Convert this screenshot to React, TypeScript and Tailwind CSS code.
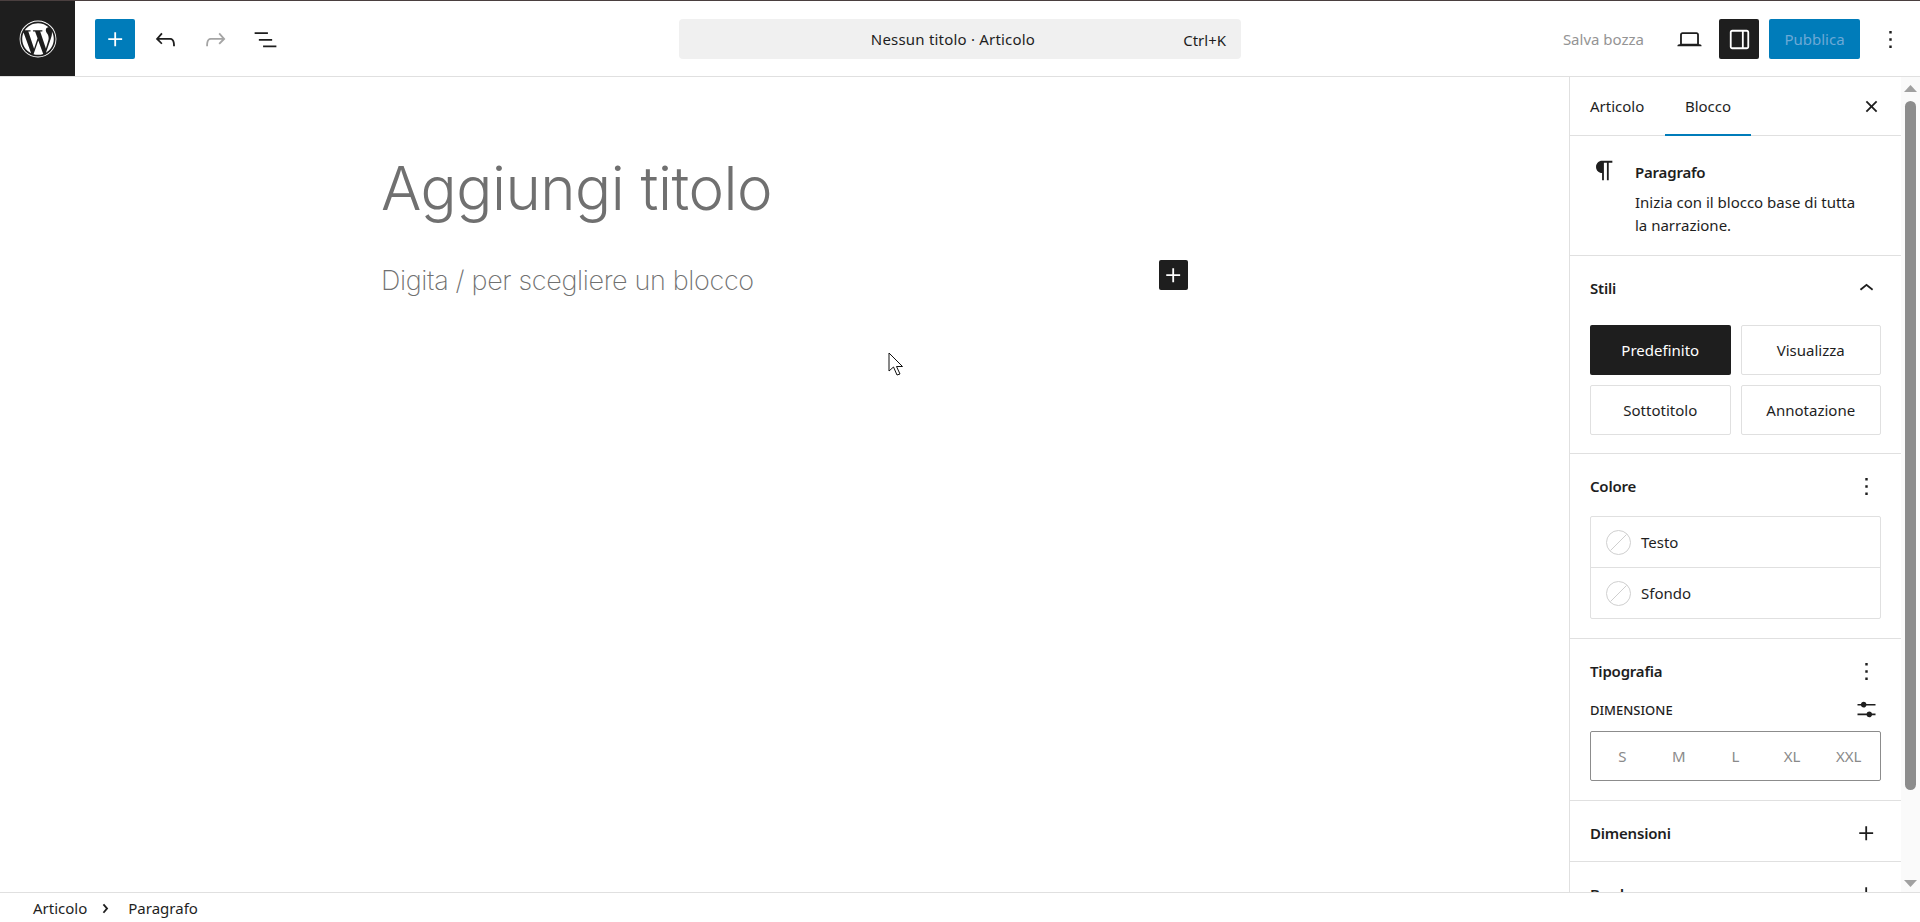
import React from "react";
import { FaWordpress } from "react-icons/fa";

const P = ({ d, className = "", size = 29 }: { d: string; className?: string; size?: number }) => (
  <svg viewBox="0 0 24 24" width={size} height={size} fill="currentColor" className={"shrink-0 " + className}>
    <path d={d} fillRule="evenodd" />
  </svg>
);

const plus = "M11 12.5V17.5H12.5V12.5H17.5V11H12.5V6H11V11H6V12.5H11Z";
const undo = "M18.3 11.7c-.6-.6-1.4-.9-2.3-.9H6.7l2.9-3.3-1.1-1-4.5 5L8.5 16l1-1-2.7-2.7H16c.5 0 .9.2 1.3.5 1 1 1 3.4 1 4.5v.3h1.5v-.2c0-1.5 0-4.3-1.5-5.7z";
const redo = "M15.6 6.5l-1.1 1 2.9 3.3H8c-.9 0-1.7.3-2.3.9-1.4 1.5-1.4 4.2-1.4 5.6v.2h1.5v-.3c0-1.1 0-3.5 1-4.5.3-.3.7-.5 1.3-.5h9.2L14.5 15l1.1 1.1 4.6-4.6-4.6-5z";
const listView = "M3 6h11v1.5H3V6Zm3.5 5.5h11V13h-11v-1.5ZM21 17H10v1.5h11V17Z";
const close = "M12 13.06l3.712 3.713 1.061-1.06L13.061 12l3.712-3.712-1.06-1.06L12 10.938 8.288 7.227l-1.061 1.06L10.939 12l-3.712 3.712 1.06 1.061L12 13.061z";
const more = "M13 19h-2v-2h2v2zm0-6h-2v-2h2v2zm0-6h-2V5h2v2z";
const chevUp = "M6.5 12.4L12 8l5.5 4.4-.9 1.2L12 10l-4.5 3.6-1-1.2z";
const chevRight = "M10.8622 8.04053L14.2805 12.0286L10.8622 16.0167L9.72327 15.0405L12.3049 12.0286L9.72327 9.01672L10.8622 8.04053Z";
const para = "m9.99609 14v-.2251l.00391.0001v6.225h1.5v-14.5h2.5v14.5h1.5v-14.5h3v-1.5h-8.50391c-2.76142 0-5 2.23858-5 5 0 2.7614 2.23858 5 5 5z";
const desktop = "M20.5 16h-.7V8c0-1.1-.9-2-2-2H6.2c-1.1 0-2 .9-2 2v8h-.7c-.8 0-1.5.7-1.5 1.5h20c0-.8-.7-1.5-1.5-1.5zM5.7 8c0-.3.2-.5.5-.5h11.6c.3 0 .5.2.5.5v7.6H5.7V8z";
const drawer = "M18 4H6c-1.1 0-2 .9-2 2v12c0 1.1.9 2 2 2h12c1.1 0 2-.9 2-2V6c0-1.1-.9-2-2-2zm-4 14.5H6c-.3 0-.5-.2-.5-.5V6c0-.3.2-.5.5-.5h8v13zm4.5-.5c0 .3-.2.5-.5.5h-2.5v-13H18c.3 0 .5.2.5.5v12z";
const sliders = "M14.5 13.8c-1.1 0-2.1.7-2.4 1.8H4V17h8.1c.3 1 1.3 1.8 2.4 1.8s2.1-.7 2.4-1.8H20v-1.5h-3.1c-.3-1-1.3-1.7-2.4-1.7zM11.9 7c-.3-1-1.3-1.8-2.4-1.8S7.4 6 7.1 7H4v1.5h3.1c.3 1 1.3 1.8 2.4 1.8s2.1-.7 2.4-1.8H20V7h-8.1z";

const IconBtn = ({ d, className = "" }: { d: string; className?: string }) => (
  <div className={"w-10 h-10 flex items-center justify-center rounded-[2px] " + className}>
    <P d={d} />
  </div>
);

const SectionHead = ({ title, icon }: { title: string; icon: string }) => (
  <div className="flex h-6 items-center justify-between">
    <span className="font-semibold tracking-[-0.2px]">{title}</span>
    <P d={icon} />
  </div>
);

const StyleBtn = ({ label, active }: { label: string; active?: boolean }) => (
  <div
    className={
      "h-[50px] flex items-center justify-center rounded-[2px] pt-px " +
      (active ? "bg-[#1e1e1e] text-white" : "border border-[#e0e0e0]")
    }
  >
    {label}
  </div>
);

const Swatch = ({ label, last }: { label: string; last?: boolean }) => (
  <div className={"flex items-center pl-[15px] " + (last ? "h-[50px] pt-px" : "h-[51px] border-b border-[#e0e0e0]")}>
    <svg width="25" height="25" viewBox="0 0 25 25" className="shrink-0">
      <circle cx="12.5" cy="12.5" r="12" fill="#fff" stroke="#cfcfcf" />
      <path d="M4.5 20.5 L20.5 4.5" stroke="#cfcfcf" />
    </svg>
    <span className="ml-[10px]">{label}</span>
  </div>
);

export default function App() {
  return (
    <div
      className="w-[1920px] h-[922px] flex flex-col overflow-hidden bg-white text-[#1e1e1e] text-[15px]"
      style={{ fontFamily: '"Noto Sans", sans-serif' }}
    >
      <div className="h-px bg-[#4a3f3f] shrink-0" />
      <header className="h-[76px] shrink-0 flex border-b border-[#e0e0e0]">
        <div className="w-[679px] flex">
          <div className="w-[75px] bg-[#1e1e1e] text-white flex items-center justify-center">
            <FaWordpress size={38} />
          </div>
          <div className="flex items-center gap-[10px] ml-5 pt-px">
            <IconBtn d={plus} className="bg-[#007cba] text-white" />
            <IconBtn d={undo} />
            <IconBtn d={redo} className="text-[#a5a5a5]" />
            <IconBtn d={listView} />
          </div>
        </div>
        <div className="flex items-center pt-px">
          <div className="w-[562px] h-10 rounded-[4px] bg-[#f0f0f0] relative flex items-center justify-center pr-[14px]">
            <span className="tracking-[0.2px]">Nessun titolo · Articolo</span>
            <span className="absolute right-[15px] top-[10px]">Ctrl+K</span>
          </div>
        </div>
        <div className="flex-1 flex items-center justify-end pr-[10px] pt-px">
          <span className="text-[#949494] mr-[25px]">Salva bozza</span>
          <IconBtn d={desktop} />
          <IconBtn d={drawer} className="bg-[#1e1e1e] text-white ml-[10px]" />
          <div className="w-[91px] h-10 ml-[10px] rounded-[2px] bg-[#007cba] text-[#6ca9d6] flex items-center justify-center">
            Pubblica
          </div>
          <IconBtn d={more} className="ml-[10px]" />
        </div>
      </header>

      <div className="flex-1 min-h-0 flex">
        <main className="w-[1569px] shrink-0 pl-[381px] pt-[79px] text-[#707070]">
          <h1
            className="text-[60px] leading-[64px] font-light tracking-[-0.5px]"
            style={{ fontFamily: 'Inter, sans-serif' }}
          >
            Aggiungi titolo
          </h1>
          <div className="w-[807px] mt-[40px] flex items-start justify-between">
            <p
              className="text-[27px] leading-[40px] font-extralight tracking-[-0.35px] mt-px"
              style={{ fontFamily: 'Inter, sans-serif' }}
            >
              Digita / per scegliere un blocco
            </p>
            <div className="w-[29px] h-[30px] rounded-[2px] bg-[#1e1e1e] text-white flex items-center justify-center">
              <P d={plus} />
            </div>
          </div>
        </main>

        <aside className="w-[332px] shrink-0 border-l border-[#e0e0e0] overflow-hidden">
          <div className="h-[59px] flex border-b border-[#e0e0e0] relative">
            <div className="w-[95px] pl-5 flex items-center">Articolo</div>
            <div className="w-[86px] flex items-center justify-center relative">
              Blocco
              <div className="absolute left-0 right-0 -bottom-px h-[2px] bg-[#007cba]" />
            </div>
            <div className="ml-auto mr-[15px] flex items-center">
              <P d={close} />
            </div>
          </div>

          <div className="h-[120px] flex border-b border-[#e0e0e0] px-5 pt-5">
            <P d={para} className="mr-4" />
            <div>
              <div className="font-semibold tracking-[-0.2px] leading-[32px]">Paragrafo</div>
              <div className="leading-[23px] mt-[3px] w-[232px]">
                Inizia con il blocco base di tutta la narrazione.
              </div>
            </div>
          </div>

          <section className="px-5 pt-5 pb-[18px] border-b border-[#e0e0e0]">
            <SectionHead title="Stili" icon={chevUp} />
            <div className="grid grid-cols-2 gap-[10px] mt-[25px]">
              <StyleBtn label="Predefinito" active />
              <StyleBtn label="Visualizza" />
              <StyleBtn label="Sottotitolo" />
              <StyleBtn label="Annotazione" />
            </div>
          </section>

          <section className="px-5 pt-5 pb-[19px] border-b border-[#e0e0e0]">
            <SectionHead title="Colore" icon={more} />
            <div className="mt-[18px] border border-[#e0e0e0] rounded-[2px]">
              <Swatch label="Testo" />
              <Swatch label="Sfondo" last />
            </div>
          </section>

          <section className="px-5 pt-5 pb-[19px] border-b border-[#e0e0e0]">
            <SectionHead title="Tipografia" icon={more} />
            <div className="flex items-center justify-between mt-4 h-6">
              <span className="text-[13px] font-medium">DIMENSIONE</span>
              <P d={sliders} size={27} className="mr-px mb-[3px]" />
            </div>
            <div className="mt-[8px] h-[50px] border border-[#8c8c8c] rounded-[2px] grid grid-cols-5 items-center text-center text-[#8a8a8a] px-[3px]">
              <span>S</span>
              <span>M</span>
              <span>L</span>
              <span>XL</span>
              <span>XXL</span>
            </div>
          </section>

          <section className="px-5 pt-5 pb-[16px] border-b border-[#e0e0e0]">
            <SectionHead title="Dimensioni" icon={plus} />
          </section>

          <section className="px-5 pt-5 pb-5">
            <SectionHead title="Bordo" icon={plus} />
          </section>
        </aside>

        <div className="w-[19px] shrink-0 bg-[#fafafa] flex flex-col items-center">
          <svg width="13" height="8" viewBox="0 0 13 8" className="mt-[8px] shrink-0">
            <path d="M6.5 0 L13 7 H0 Z" fill="#a0a0a0" />
          </svg>
          <div className="w-[11px] h-[689px] mt-[8px] rounded-full bg-[#8c8c8c]" />
          <svg width="13" height="8" viewBox="0 0 13 8" className="mt-[89px] shrink-0">
            <path d="M6.5 8 L13 1 H0 Z" fill="#a0a0a0" />
          </svg>
        </div>
      </div>

      <footer className="h-[30px] shrink-0 border-t border-[#e0e0e0] flex items-center pl-[33px] pt-px">
        <span>Articolo</span>
        <P d={chevRight} className="ml-1 mr-[8px]" />
        <span>Paragrafo</span>
      </footer>

      <svg width="16" height="25" viewBox="0 0 16 25" className="absolute left-[888px] top-[352px]">
        <path d="M1 1 L1 19 L5.5 15 L9 23 L12 22 L8.5 14.5 L14.5 14.5 Z" fill="#fff" stroke="#111" strokeWidth="1" />
      </svg>
    </div>
  );
}
